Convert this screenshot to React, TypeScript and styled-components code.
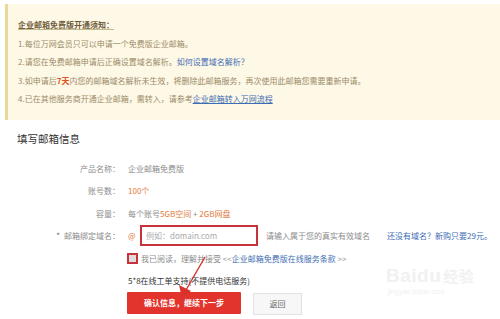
import React from "react";
import styled, { createGlobalStyle } from "styled-components";

const GlobalStyle = createGlobalStyle`
  html, body { margin: 0; padding: 0; background: #fff; }
  body { font-family: "Noto Sans CJK SC", "Noto Sans", sans-serif; }
  * { box-sizing: border-box; }
`;

const Page = styled.div`
  position: relative;
  width: 500px;
  height: 319px;
  overflow: hidden;
  background: #fff;
`;

const Notice = styled.div`
  margin: 4px 0 0 5px;
  border-left: 3px solid #e9d89c;
  background: #fef8e6;
  padding: 12px 0 11.5px 10px;
  font-size: 8px;
  line-height: 18.5px;
  color: #9b8b69;
  white-space: nowrap;
`;

const NoticeTitle = styled.div`
  font-weight: bold;
  color: #6e5d3c;
  text-decoration: underline;
  text-decoration-color: #c9b98f;
`;

const NoticeLine = styled.div``;

const Link = styled.span<{ $underline?: boolean }>`
  color: #3d6db3;
  text-decoration: ${(p) => (p.$underline ? "underline" : "none")};
`;

const Hot = styled.span`
  color: #e2521c;
  font-weight: bold;
`;

const SectionTitle = styled.div`
  margin: 12px 0 0 17px;
  font-size: 10.5px;
  line-height: 14px;
  color: #333;
`;

const Form = styled.div`
  margin-top: 10.75px;
  display: flex;
  flex-direction: column;
`;

const Row = styled.div`
  display: flex;
  align-items: center;
  height: 22.5px;
  font-size: 8px;
  color: #8c8c8c;
  white-space: nowrap;
`;

const Label = styled.div`
  width: 120px;
  text-align: right;
  color: #8c8c8c;
`;

const Star = styled.span`
  color: #666;
  margin-right: 4px;
`;

const Value = styled.div`
  margin-left: 8px;
  display: flex;
  align-items: center;
`;

const Body = styled.div`
  margin-left: 127px;
  display: flex;
  align-items: center;
`;

const Orange = styled.span`
  color: #e07a3c;
`;

const At = styled.span`
  color: #e07a3c;
  width: 12px;
  font-size: 8px;
`;

const DomainInput = styled.div`
  width: 118px;
  height: 21px;
  border: 2px solid #c6343b;
  padding-left: 4px;
  display: flex;
  align-items: center;
  color: #a9a9a9;
  font-size: 8px;
`;

const Hint = styled.span`
  margin-left: 8px;
  color: #8c8c8c;
`;

const BuyLink = styled.span`
  margin-left: 17px;
  color: #3d6db3;
`;

const CheckMark = styled.span`
  width: 11px;
  height: 11px;
  border: 2px solid #c6343b;
  background: #ddd;
  display: inline-block;
  margin-right: 3px;
`;

const Support = styled.span`
  margin-left: 1px;
  color: #333;
`;

const Buttons = styled.div`
  margin-left: 127px;
  display: flex;
  align-items: flex-start;
  gap: 12px;
  height: 24px;
`;

const PrimaryButton = styled.div`
  width: 114px;
  height: 22px;
  background: #e3332d;
  color: #fff;
  font-size: 8px;
  font-weight: bold;
  display: flex;
  align-items: center;
  justify-content: center;
  border-radius: 1px;
`;

const SecondaryButton = styled.div`
  margin-top: 1px;
  width: 49px;
  height: 22px;
  background: #f7f7f7;
  border: 1px solid #e2e2e2;
  color: #666;
  font-size: 8px;
  display: flex;
  align-items: center;
  justify-content: center;
`;

const ArrowLayer = styled.svg`
  position: absolute;
  left: 0;
  top: 0;
  pointer-events: none;
`;

const Watermark = styled.div`
  position: absolute;
  left: 386px;
  top: 266px;
  color: #f1f1f1;
  font-family: "Liberation Sans", sans-serif;
  line-height: 1;
  white-space: nowrap;
`;

const WmBig = styled.div`
  font-size: 19px;
  font-weight: bold;
  letter-spacing: 0.5px;
`;

const WmCn = styled.span`
  font-family: "Noto Sans CJK SC", sans-serif;
  font-size: 15px;
  margin-left: 2px;
`;

const WmSmall = styled.div`
  font-size: 7px;
  margin-top: 3px;
  margin-left: 2px;
`;

export default function App() {
  return (
    <>
      <GlobalStyle />
      <Page>
        <Notice>
          <NoticeTitle>企业邮箱免费版开通须知：</NoticeTitle>
          <NoticeLine>1.每位万网会员只可以申请一个免费版企业邮箱。</NoticeLine>
          <NoticeLine>
            2.请您在免费邮箱申请后正确设置域名解析。<Link>如何设置域名解析？</Link>
          </NoticeLine>
          <NoticeLine>
            3.如申请后<Hot>7天</Hot>内您的邮箱域名解析未生效，将删除此邮箱服务，再次使用此邮箱您需要重新申请。
          </NoticeLine>
          <NoticeLine>
            4.已在其他服务商开通企业邮箱，需转入，请参考<Link $underline>企业邮箱转入万网流程</Link>
          </NoticeLine>
        </Notice>

        <SectionTitle>填写邮箱信息</SectionTitle>

        <Form>
          <Row>
            <Label>产品名称：</Label>
            <Value>企业邮箱免费版</Value>
          </Row>
          <Row>
            <Label>账号数：</Label>
            <Value>
              <Orange>100个</Orange>
            </Value>
          </Row>
          <Row>
            <Label>容量：</Label>
            <Value>
              每个账号<Orange>5GB空间</Orange>&nbsp;+&nbsp;<Orange>2GB网盘</Orange>
            </Value>
          </Row>
          <Row>
            <Label>
              <Star>*</Star>邮箱绑定域名：
            </Label>
            <Value>
              <At>@</At>
              <DomainInput>例如：domain.com</DomainInput>
              <Hint>请输入属于您的真实有效域名</Hint>
              <BuyLink>还没有域名？新购只要29元。</BuyLink>
            </Value>
          </Row>
          <Row>
            <Body>
              <CheckMark />
              我已阅读，理解并接受 &lt;&lt; <Link>企业邮箱免费版在线服务条款</Link>&nbsp;&gt;&gt;
            </Body>
          </Row>
          <Row>
            <Body>
              <Support>5*8在线工单支持(不提供电话服务)</Support>
            </Body>
          </Row>
          <Buttons>
            <PrimaryButton>确认信息，继续下一步</PrimaryButton>
            <SecondaryButton>返回</SecondaryButton>
          </Buttons>
        </Form>

        <Watermark>
          <WmBig>
            Baidu<WmCn>经验</WmCn>
          </WmBig>
          <WmSmall>jingyan.baidu.com</WmSmall>
        </Watermark>

        <ArrowLayer width="500" height="319" viewBox="0 0 500 319">
          <line x1="205" y1="257" x2="186" y2="290" stroke="#d8322c" strokeWidth="1.4" />
          <polygon points="182,298 179,285 191,291" fill="#d8322c" />
        </ArrowLayer>
      </Page>
    </>
  );
}
